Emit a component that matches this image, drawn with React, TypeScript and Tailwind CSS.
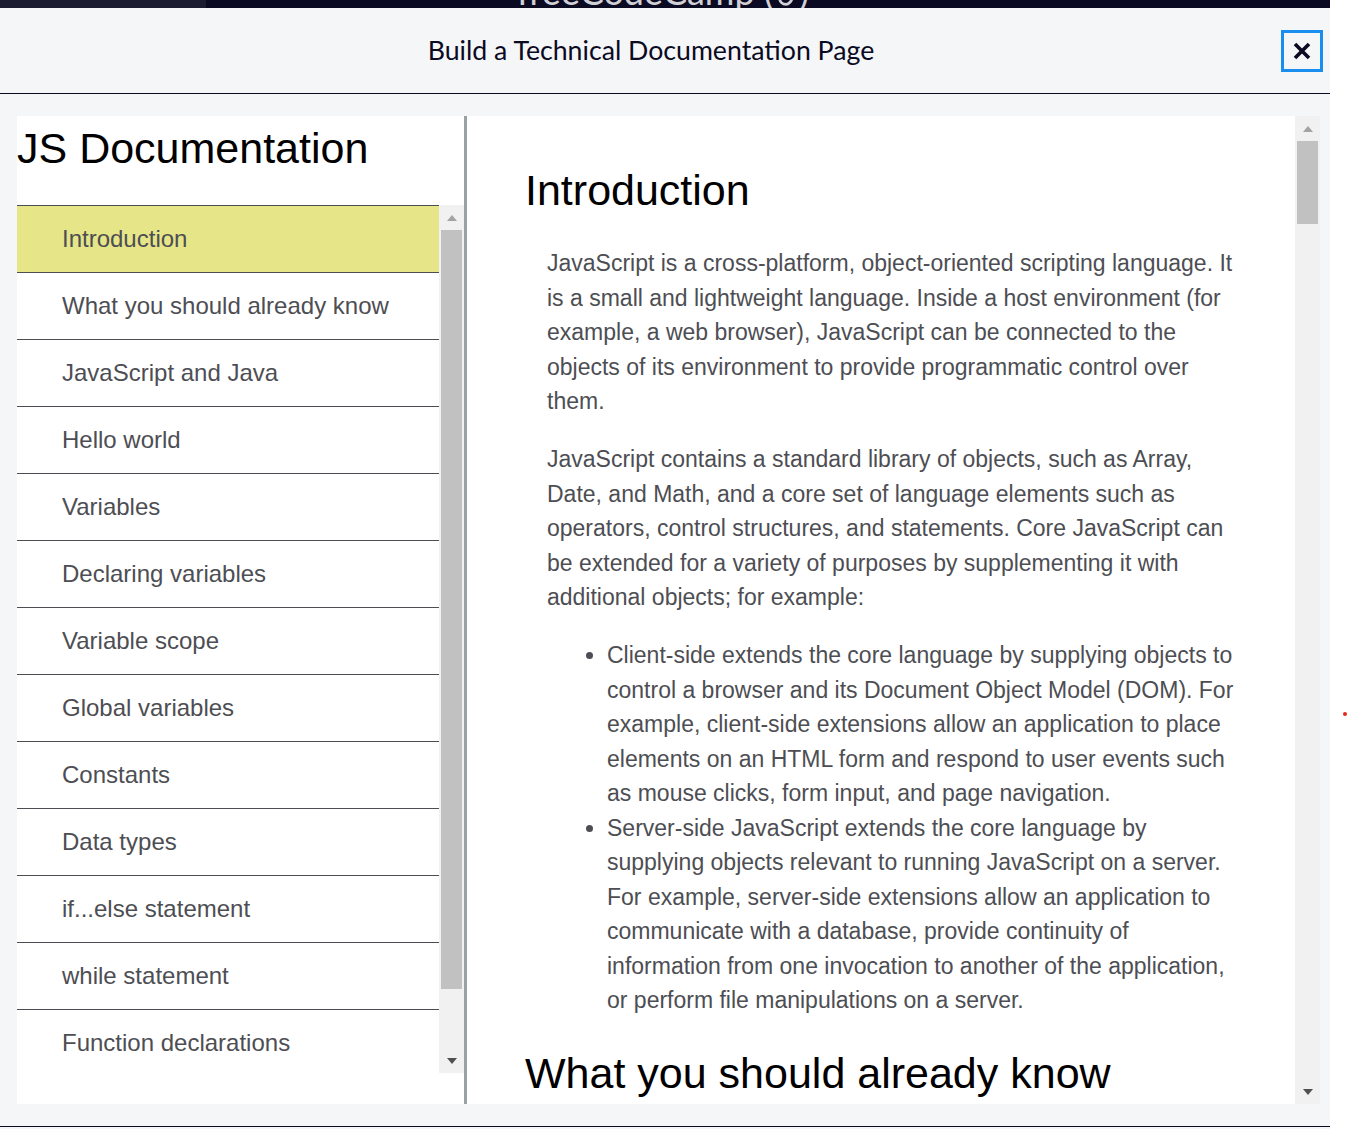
const navItems = [
  "Introduction",
  "What you should already know",
  "JavaScript and Java",
  "Hello world",
  "Variables",
  "Declaring variables",
  "Variable scope",
  "Global variables",
  "Constants",
  "Data types",
  "if...else statement",
  "while statement",
  "Function declarations",
];

function UpArrow({ color }: { color: string }) {
  return (
    <svg width="10" height="6" viewBox="0 0 10 6">
      <path d="M0 6 L5 0 L10 6 Z" fill={color} />
    </svg>
  );
}

function DownArrow({ color }: { color: string }) {
  return (
    <svg width="10" height="6" viewBox="0 0 10 6">
      <path d="M0 0 L10 0 L5 6 Z" fill={color} />
    </svg>
  );
}

function Scrollbar({ thumb }: { thumb: string }) {
  return (
    <div className="flex w-[25px] shrink-0 flex-col bg-[#f1f1f1]">
      <div className="flex h-[25px] items-center justify-center">
        <UpArrow color="#a3a3a3" />
      </div>
      <div className={`mx-[2px] bg-[#c1c1c1] ${thumb}`} />
      <div className="flex-1" />
      <div className="flex h-[25px] items-center justify-center">
        <DownArrow color="#505050" />
      </div>
    </div>
  );
}

export default function App() {
  return (
    <div className="relative h-[1129px] w-[1349px] overflow-hidden bg-white">
      <div className="flex h-full w-[1330px] flex-col bg-[#f5f6f7]">
        {/* browser chrome strip */}
        <div className="flex h-[8px] shrink-0 overflow-hidden bg-[#0a0a23]">
          <div className="w-[206px] bg-[#1b1b32]" />
          <div className="flex flex-1 justify-center">
            <span className="mt-[-27px] flex items-center gap-[3px] pr-[210px] font-['Lato',sans-serif] text-[36px] leading-[34px] text-[#d0d0d5]">
              freeCodeCamp (
              <svg width="20" height="30" viewBox="0 0 18 26">
                <path d="M9 2 C12 8 16 11 15 18 C14 23 11 25 9 25 C6 25 3 23 3 18 C3 13 7 10 9 2 Z" fill="none" stroke="#d0d0d5" strokeWidth="2.5" />
              </svg>
              )
            </span>
          </div>
        </div>

        {/* modal header */}
        <div className="relative flex h-[86px] shrink-0 items-center justify-center border-b border-[#0a0a23]">
          <h1 className="pr-[28px] font-['Lato',sans-serif] text-[26.7px] text-[#0a0a23]">
            Build a Technical Documentation Page
          </h1>
          <button className="absolute right-[7px] top-[22px] flex h-[42px] w-[42px] items-center justify-center border-[3px] border-[#198eee]">
            <svg width="20" height="20" viewBox="0 0 20 20">
              <path d="M3 3 L17 17 M17 3 L3 17" stroke="#0a0a23" strokeWidth="3.6" strokeLinecap="butt" />
            </svg>
          </button>
        </div>

        {/* preview frame */}
        <div className="h-[1033px] shrink-0 border-b border-[#0a0a23] pb-[22px] pl-[17px] pt-[22px]">
          <div className="flex h-[988px] w-[1303px] overflow-hidden bg-white font-['Liberation_Sans',Arial,sans-serif]">
            <nav className="flex w-[450px] shrink-0 flex-col border-r-[3px] border-[#98a2a2]">
              <header className="mt-[8px] h-[81px] text-[43px] leading-[48px] text-black">
                JS Documentation
              </header>
              <div className="flex h-[868px]">
                <ul className="h-full w-[422px] overflow-hidden">
                  {navItems.map((item, index) => (
                    <li
                      key={item}
                      className={`flex h-[67px] items-center border-t border-[#4d4e53] pl-[45px] text-[24px] text-[#4d4e53] ${
                        index === 0 ? "bg-[#e6e588]" : ""
                      }`}
                    >
                      {item}
                    </li>
                  ))}
                </ul>
                <Scrollbar thumb="h-[759px]" />
              </div>
            </nav>

            <main className="w-[828px] shrink-0 overflow-hidden pl-[58px] pt-[50px]">
              <section>
                <h2 className="text-[43px] leading-[48px] text-black">Introduction</h2>
                <div className="ml-[22px] mt-[32px] w-[701px] text-[23px] leading-[34.5px] text-[#4d4e53]">
                  <p>
                    JavaScript is a cross-platform, object-oriented scripting language. It is a small
                    and lightweight language. Inside a host environment (for example, a web browser),
                    JavaScript can be connected to the objects of its environment to provide
                    programmatic control over them.
                  </p>
                  <p className="mt-[23.5px]">
                    JavaScript contains a standard library of objects, such as Array, Date, and Math,
                    and a core set of language elements such as operators, control structures, and
                    statements. Core JavaScript can be extended for a variety of purposes by
                    supplementing it with additional objects; for example:
                  </p>
                  <ul className="mt-[23.5px] list-disc pl-[60px]">
                    <li>
                      Client-side extends the core language by supplying objects to control a browser
                      and its Document Object Model (DOM). For example, client-side extensions allow an
                      application to place elements on an HTML form and respond to user events such as
                      mouse clicks, form input, and page navigation.
                    </li>
                    <li>
                      Server-side JavaScript extends the core language by supplying objects relevant to
                      running JavaScript on a server. For example, server-side extensions allow an
                      application to communicate with a database, provide continuity of information
                      from one invocation to another of the application, or perform file manipulations
                      on a server.
                    </li>
                  </ul>
                </div>
              </section>
              <section className="mt-[31px]">
                <h2 className="text-[43px] leading-[48px] text-black">What you should already know</h2>
              </section>
            </main>

            <Scrollbar thumb="h-[83px]" />
          </div>
        </div>
      </div>
      <div className="absolute left-[1343px] top-[712px] h-[4px] w-[4px] rounded-full bg-[#e8261f]" />
    </div>
  );
}
